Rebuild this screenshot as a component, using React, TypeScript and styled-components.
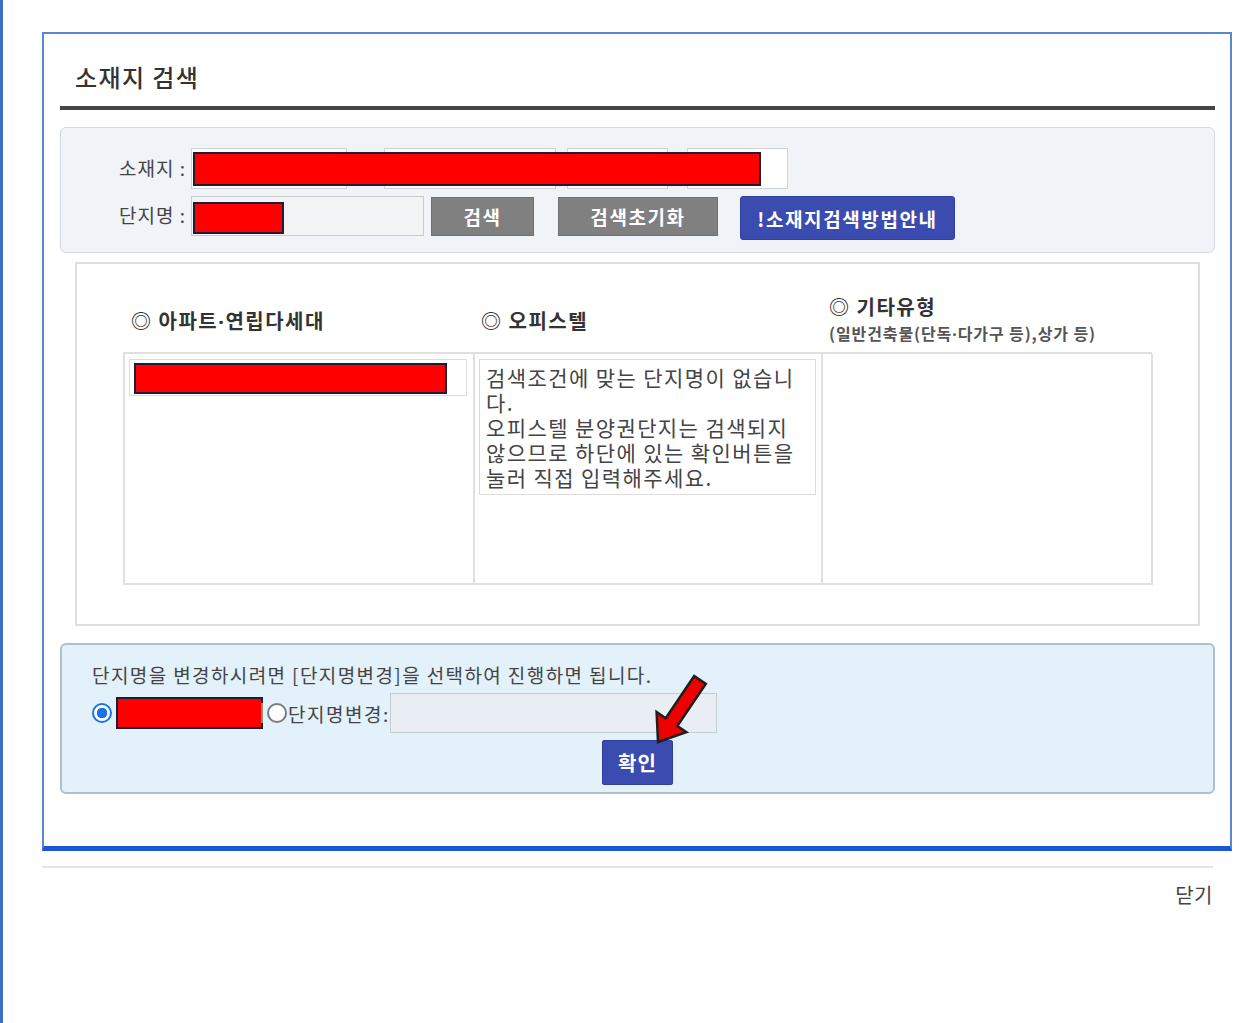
import React from "react";
import styled, { createGlobalStyle } from "styled-components";

const Global = createGlobalStyle`
  html, body { margin: 0; padding: 0; background: #fff; }
  body { font-family: "Noto Sans CJK KR", "Noto Sans", sans-serif; color: #333; }
  * { box-sizing: border-box; }
`;

const Page = styled.div`
  min-height: 1023px;
  border-left: 3px solid #3b6fc1;
  padding: 32px 7px 0 39px;
`;

const Dialog = styled.div`
  border: 2px solid #5b86d4;
  border-bottom: 5px solid #1a56d8;
  padding: 0 15px 52px 16px;
`;

const Title = styled.h1`
  margin: 0;
  height: 76px;
  padding: 28px 15px 0;
  font-size: 24px;
  line-height: 30px;
  font-weight: 500;
  letter-spacing: 1.4px;
  color: #333;
  border-bottom: 4px solid #454545;
`;

const SearchBox = styled.div`
  margin-top: 17px;
  border: 1px solid #d5dae0;
  border-radius: 6px;
  background: #f0f3f7;
  padding: 20px 0 12px;
  display: grid;
  grid-template-columns: 125px 1fr;
  column-gap: 5px;
  row-gap: 7px;
  align-items: start;
`;

const Label = styled.div<{ $h: number }>`
  height: ${(p) => p.$h}px;
  display: flex;
  align-items: center;
  justify-content: flex-end;
  padding-bottom: 3px;
  font-size: 19px;
  letter-spacing: 1px;
  color: #444;
`;

const FieldRow = styled.div`
  position: relative;
  display: flex;
  align-items: flex-start;
`;

const SelectBox = styled.div<{ $w: number; $ml: number }>`
  width: ${(p) => p.$w}px;
  height: 41px;
  margin-left: ${(p) => p.$ml}px;
  background: #fff;
  border: 1px solid #cfd3d8;
`;

const Redact = styled.span<{ $w: number; $h: number; $ml?: number }>`
  display: inline-block;
  width: ${(p) => p.$w}px;
  height: ${(p) => p.$h}px;
  margin-left: ${(p) => p.$ml ?? 0}px;
  background: #ff0000;
  border: 2px solid #1d1d3a;
  flex-shrink: 0;
`;

const RedactOver = styled(Redact)`
  position: absolute;
  left: 2px;
  top: 4px;
`;

const TextField = styled.div<{ $w: number; $bg: string }>`
  width: ${(p) => p.$w}px;
  height: 40px;
  background: ${(p) => p.$bg};
  border: 1px solid #c8ccd0;
  padding: 5px 0 0 1px;
`;

const Button = styled.button<{ $w: number; $h: number; $ml: number; $blue?: boolean }>`
  width: ${(p) => p.$w}px;
  height: ${(p) => p.$h}px;
  margin-left: ${(p) => p.$ml}px;
  margin-top: ${(p) => (p.$blue ? 0 : 1)}px;
  border: 1px solid ${(p) => (p.$blue ? "#2f40a0" : "#6f6f6f")};
  border-radius: ${(p) => (p.$blue ? 3 : 0)}px;
  background: ${(p) => (p.$blue ? "#3b4cb0" : "#808080")};
  color: #fff;
  font-family: inherit;
  font-size: 19px;
  font-weight: 700;
  letter-spacing: 1.6px;
  padding: 0;
  cursor: pointer;
`;

const Results = styled.div`
  margin: 9px 15px 0;
  border: 2px solid #dedede;
  padding: 25px 46px 39px;
`;

const Columns = styled.div`
  display: grid;
  grid-template-columns: 350px 348px 330px;
`;

const HeadCell = styled.div`
  height: 63px;
  display: flex;
  flex-direction: column;
  justify-content: center;
  padding-left: 8px;
`;

const Heading = styled.div`
  font-size: 20px;
  font-weight: 700;
  color: #333;
  line-height: 27px;
  letter-spacing: 1.5px;
`;

const SubHeading = styled.div`
  font-size: 16px;
  font-weight: 700;
  color: #555;
  line-height: 27px;
  letter-spacing: 0.9px;
`;

const Dot = styled.span`
  font-family: "Noto Sans", sans-serif;
  font-weight: 700;
`;

const Table = styled(Columns)`
  border-top: 2px solid #e0e0e0;
  border-left: 2px solid #e0e0e0;
`;

const Cell = styled.div`
  height: 231px;
  border-right: 2px solid #e0e0e0;
  border-bottom: 2px solid #e0e0e0;
  padding: 5px 5px 0 4px;
`;

const ItemBox = styled.div`
  height: 37px;
  border: 1px solid #dcdcdc;
  padding: 3px 0 0 4px;
  width: 338px;
`;

const Message = styled.div`
  height: 136px;
  border: 1px solid #dcdcdc;
  padding: 5px 6px 0;
  font-size: 21px;
  line-height: 25px;
  color: #444;
  letter-spacing: 1.4px;
  white-space: nowrap;
`;

const ChangeBox = styled.div`
  margin-top: 17px;
  border: 2px solid #b0bfc9;
  border-radius: 6px;
  background: #e2f1fa;
  padding: 18px 30px 7px;
`;

const Notice = styled.div`
  font-size: 19px;
  line-height: 24px;
  color: #444;
  letter-spacing: 1.4px;
`;

const ChoiceRow = styled.div`
  margin-top: 6px;
  height: 40px;
  display: flex;
  align-items: center;
  font-size: 19px;
  color: #444;
`;

const Radio = styled.span<{ $on?: boolean; $ml?: number }>`
  width: 20px;
  height: 20px;
  margin-left: ${(p) => p.$ml ?? 0}px;
  border-radius: 50%;
  border: 2px solid ${(p) => (p.$on ? "#1a73e8" : "#7a7a7a")};
  background: ${(p) => (p.$on ? "radial-gradient(circle, #1a73e8 0 5px, #fff 5.5px)" : "#fff")};
  flex-shrink: 0;
`;

const Sliver = styled.span`
  width: 4px;
  height: 20px;
  border-right: 2px solid #9a8c6a;
  margin-left: -4px;
`;

const ChoiceText = styled.span`
  margin-left: 1px;
  letter-spacing: 1.5px;
`;

const ConfirmRow = styled.div`
  margin-top: 7px;
  display: flex;
  justify-content: center;
`;

const ConfirmWrap = styled.div`
  position: relative;
`;

const Confirm = styled.button`
  width: 71px;
  height: 45px;
  border: 1px solid #2f40a0;
  border-radius: 2px;
  background: #3b4cb0;
  color: #fff;
  font-family: inherit;
  font-size: 20px;
  font-weight: 700;
  letter-spacing: 1px;
  padding: 0;
`;

const Arrow = styled.svg`
  position: absolute;
  left: 36px;
  top: -73px;
  pointer-events: none;
`;

const Footer = styled.div`
  margin: 15px 19px 0 0;
  border-top: 2px solid #e4e4e4;
  padding-top: 14px;
  text-align: right;
  font-size: 20px;
  line-height: 26px;
  letter-spacing: 0.5px;
  color: #444;
`;

export default function App() {
  return (
    <>
      <Global />
      <Page>
        <Dialog>
          <Title>소재지 검색</Title>
          <SearchBox>
            <Label $h={41}>소재지 :</Label>
            <FieldRow>
              <SelectBox $w={156} $ml={0} />
              <SelectBox $w={172} $ml={37} />
              <SelectBox $w={101} $ml={11} />
              <SelectBox $w={101} $ml={19} />
              <RedactOver $w={568} $h={34} />
            </FieldRow>
            <Label $h={40}>단지명 :</Label>
            <FieldRow>
              <TextField $w={233} $bg="#f2f3f4">
                <Redact $w={91} $h={32} />
              </TextField>
              <Button $w={103} $h={39} $ml={7}>검색</Button>
              <Button $w={160} $h={39} $ml={24}>검색초기화</Button>
              <Button $w={215} $h={44} $ml={22} $blue>!소재지검색방법안내</Button>
            </FieldRow>
          </SearchBox>

          <Results>
            <Columns>
              <HeadCell>
                <Heading>◎ 아파트<Dot>·</Dot>연립다세대</Heading>
              </HeadCell>
              <HeadCell>
                <Heading>◎ 오피스텔</Heading>
              </HeadCell>
              <HeadCell>
                <Heading>◎ 기타유형</Heading>
                <SubHeading>(일반건축물(단독<Dot>·</Dot>다가구 등),상가 등)</SubHeading>
              </HeadCell>
            </Columns>
            <Table>
              <Cell>
                <ItemBox>
                  <Redact $w={313} $h={31} />
                </ItemBox>
              </Cell>
              <Cell>
                <Message>
                  검색조건에 맞는 단지명이 없습니
                  <br />
                  다.
                  <br />
                  오피스텔 분양권단지는 검색되지
                  <br />
                  않으므로 하단에 있는 확인버튼을
                  <br />
                  눌러 직접 입력해주세요.
                </Message>
              </Cell>
              <Cell />
            </Table>
          </Results>

          <ChangeBox>
            <Notice>단지명을 변경하시려면 [단지명변경]을 선택하여 진행하면 됩니다.</Notice>
            <ChoiceRow>
              <Radio $on />
              <Redact $w={147} $h={32} $ml={4} />
              <Sliver />
              <Radio $ml={4} />
              <ChoiceText>단지명변경:</ChoiceText>
              <TextField $w={327} $bg="#e8eef3" />
            </ChoiceRow>
            <ConfirmRow>
              <ConfirmWrap>
                <Confirm>확인</Confirm>
                <Arrow width="80" height="85" viewBox="0 0 80 85">
                  <polygon
                    points="20,75 48.4,65.2 39.3,59 67.8,16.9 56.2,9.1 27.7,51.2 18.6,45"
                    fill="#ee0000"
                    stroke="#1e1e1e"
                    strokeWidth="2.5"
                    strokeLinejoin="miter"
                  />
                </Arrow>
              </ConfirmWrap>
            </ConfirmRow>
          </ChangeBox>
        </Dialog>
        <Footer>닫기</Footer>
      </Page>
    </>
  );
}
